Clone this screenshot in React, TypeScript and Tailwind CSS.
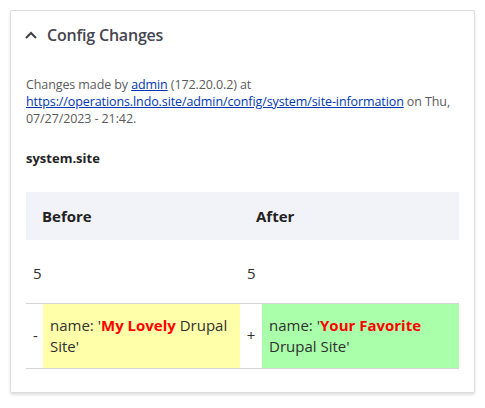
import React from 'react';

const font = { fontFamily: '"Open Sans", "Noto Sans", sans-serif' };

export default function App() {
  return (
    <div className="bg-white w-[485px] h-[408px] p-[10px]" style={font}>
      <div className="border border-[#dcdcdc] rounded-[2px] shadow-[0_2px_3px_rgba(0,0,0,0.12)] bg-white h-[383px]">
        {/* header */}
        <div className="flex items-center h-[48px] pl-[13px]">
          <svg width="14" height="14" viewBox="0 0 14 14" className="mr-[9px]">
            <path d="M2 10 L7 5 L12 10" fill="none" stroke="#3f3f46" strokeWidth="2" />
          </svg>
          <span className="text-[16px] font-semibold text-[#45454f] tracking-[-0.2px]">Config Changes</span>
        </div>

        <div className="px-[15px] pt-[17px]">
          <p className="text-[12.5px] leading-[17px] text-[#5b5b5b] tracking-[-0.1px]">
            Changes made by <a className="text-[#0036b1] underline">admin</a> (172.20.0.2) at{' '}
            <a className="text-[#0036b1] underline">https://operations.lndo.site/admin/config/system/site-information</a> on Thu,
            07/27/2023 - 21:42.
          </p>

          <h4 className="mt-[22px] text-[13px] font-bold text-[#232323] leading-[18px]">system.site</h4>

          <table className="mt-[25px] w-full table-fixed border-collapse text-[15px] text-[#2f2f2f]">
            <colgroup>
              <col className="w-[17px]" />
              <col className="w-[197px]" />
              <col className="w-[22px]" />
              <col />
            </colgroup>
            <thead>
              <tr className="bg-[#f2f3f8] h-[48px]">
                <th colSpan={2} className="text-left font-bold pl-[16px] text-[#222]">Before</th>
                <th colSpan={2} className="text-left font-bold pl-[16px] text-[#222]">After</th>
              </tr>
            </thead>
            <tbody>
              <tr className="h-[63px]">
                <td colSpan={2} className="pl-[7px] pt-[4px]">5</td>
                <td colSpan={2} className="pl-[7px] pt-[4px]">5</td>
              </tr>
              <tr className="border-y border-[#d4d4d8]">
                <td className="text-center align-middle pl-[2px]">-</td>
                <td className="bg-[#ffffaa] px-[7px] py-[11px] leading-[21px] align-middle">
                  name: '<span className="text-[#ff0000] font-bold">My Lovely</span> Drupal Site'
                </td>
                <td className="text-center align-middle">+</td>
                <td className="bg-[#aaffaa] px-[7px] py-[11px] leading-[21px] align-middle">
                  name: '<span className="text-[#ff0000] font-bold">Your Favorite</span> Drupal Site'
                </td>
              </tr>
            </tbody>
          </table>
        </div>
      </div>
    </div>
  );
}
